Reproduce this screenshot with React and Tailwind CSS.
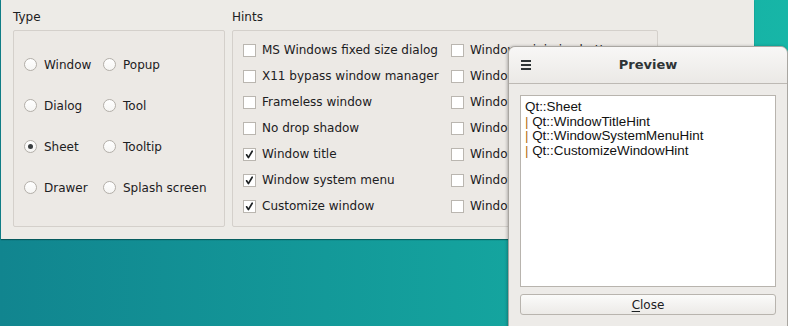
import React from 'react';

const types = [
  ['Window', 'Popup'],
  ['Dialog', 'Tool'],
  ['Sheet', 'Tooltip'],
  ['Drawer', 'Splash screen'],
];

const hintsLeft = [
  ['MS Windows fixed size dialog', false],
  ['X11 bypass window manager', false],
  ['Frameless window', false],
  ['No drop shadow', false],
  ['Window title', true],
  ['Window system menu', true],
  ['Customize window', true],
];

const hintsRight = [
  'Window minimize button',
  'Window maximize button',
  'Window close button',
  'Window context help button',
  'Window shade button',
  'Window stays on top',
  'Window stays on bottom',
];

function Radio({ label, checked }) {
  return (
    <div className="flex items-center gap-[7px]">
      <span className="w-[13px] h-[13px] rounded-full border border-[#b3afa9] bg-gradient-to-b from-white to-[#f6f5f3] flex items-center justify-center">
        {checked && <span className="w-[5px] h-[5px] rounded-full bg-[#3a3e40]" />}
      </span>
      <span>{label}</span>
    </div>
  );
}

function Check({ label, checked }) {
  return (
    <div className="flex items-center gap-[6px] h-[26px] whitespace-nowrap">
      <span className="w-[13px] h-[13px] shrink-0 border border-[#bab6b0] bg-white flex items-center justify-center">
        {checked && (
          <svg width="9" height="9" viewBox="0 0 9 9">
            <path d="M1.6 4.8 L3.4 7.6 L7.2 1.2" fill="none" stroke="#1e2224" strokeWidth="1.7" strokeLinecap="round" strokeLinejoin="round" />
          </svg>
        )}
      </span>
      <span>{label}</span>
    </div>
  );
}

export default function App() {
  return (
    <div
      className="relative w-[788px] h-[326px] overflow-hidden bg-gradient-to-r from-[#11858f] to-[#17b6a7] text-[#1c2022] text-[12px] leading-[14px]"
      style={{ fontFamily: '"DejaVu Sans", sans-serif' }}
    >
      {/* main window */}
      <div className="absolute left-[1px] top-0 w-[753px] h-[239px] bg-[#edebe7] shadow-[0_1px_1px_rgba(0,60,60,0.6)] pt-[10px] pl-[12px] flex gap-[7px]">
        <div className="flex flex-col w-[212px]">
          <div className="h-[14px] mb-[6px]">Type</div>
          <div className="h-[197px] border border-[#d4d0cb] rounded-[2px] bg-[#ece9e5] pt-[13px] pl-[10px]">
            {types.map(([a, b]) => (
              <div key={a} className="flex items-center h-[41px]">
                <div className="w-[79px]">
                  <Radio label={a} checked={a === 'Sheet'} />
                </div>
                <Radio label={b} />
              </div>
            ))}
          </div>
        </div>
        <div className="flex flex-col w-[426px]">
          <div className="h-[14px] mb-[6px]">Hints</div>
          <div className="h-[197px] border border-[#d4d0cb] rounded-[2px] bg-[#ece9e5] pt-[6px] pl-[10px] flex">
            <div className="w-[208px] flex flex-col">
              {hintsLeft.map(([t, c]) => (
                <Check key={t} label={t} checked={c} />
              ))}
            </div>
            <div className="flex flex-col">
              {hintsRight.map((t) => (
                <Check key={t} label={t} />
              ))}
            </div>
          </div>
        </div>
      </div>

      {/* preview window */}
      <div className="absolute left-[508px] top-[46px] w-[280px] h-[282px] rounded-t-[7px] border border-[#a9a6a1] bg-[#edebe8] shadow-[-1px_0_3px_rgba(0,0,0,0.25)] flex flex-col">
        <div className="relative h-[37px] rounded-t-[7px] bg-gradient-to-b from-[#f8f7f6] to-[#ebe9e6] border-b border-[#bdb9b4] flex items-center justify-center">
          <div className="absolute left-[12px] top-[13px] flex flex-col gap-[2px]">
            <span className="w-[10px] h-[2px] bg-[#2e3436]" />
            <span className="w-[10px] h-[2px] bg-[#2e3436]" />
            <span className="w-[10px] h-[2px] bg-[#2e3436]" />
          </div>
          <span className="font-bold text-[13px] text-[#2e3436]">Preview</span>
        </div>
        <div className="flex flex-col px-[11px] pt-[11px]">
          <div
            className="h-[192px] border border-[#b8b4ae] bg-white px-[4px] pt-[4px] text-[13.4px] leading-[14.5px] text-[#111]"
            style={{ fontFamily: '"Liberation Sans", Arial, sans-serif' }}
          >
            <div>Qt::Sheet</div>
            <div><span className="text-[#b26a10]">|</span> Qt::WindowTitleHint</div>
            <div><span className="text-[#b26a10]">|</span> Qt::WindowSystemMenuHint</div>
            <div><span className="text-[#b26a10]">|</span> Qt::CustomizeWindowHint</div>
          </div>
          <button className="mt-[7px] h-[21px] rounded-[3px] border border-[#b8b4ae] bg-gradient-to-b from-[#fbfbfa] to-[#eceae7] text-[12px] text-[#1c2022]">
            <span className="underline underline-offset-2">C</span>lose
          </button>
        </div>
      </div>
    </div>
  );
}
